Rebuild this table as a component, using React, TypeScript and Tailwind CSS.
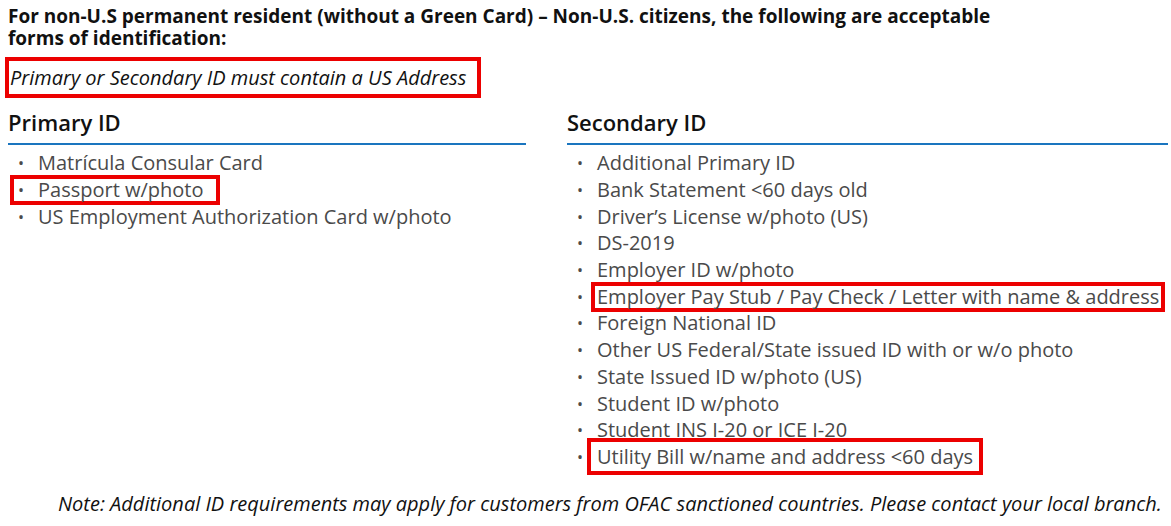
const primary = [
  { text: 'Matrícula Consular Card' },
  { text: 'Passport w/photo', box: 'all' },
  { text: 'US Employment Authorization Card w/photo' },
];

const secondary = [
  { text: 'Additional Primary ID' },
  { text: 'Bank Statement <60 days old' },
  { text: 'Driver’s License w/photo (US)' },
  { text: 'DS-2019' },
  { text: 'Employer ID w/photo' },
  { text: 'Employer Pay Stub / Pay Check / Letter with name & address', box: 'stub' },
  { text: 'Foreign National ID' },
  { text: 'Other US Federal/State issued ID with or w/o photo' },
  { text: 'State Issued ID w/photo (US)' },
  { text: 'Student ID w/photo' },
  { text: 'Student INS I-20 or ICE I-20' },
  { text: 'Utility Bill w/name and address <60 days', box: 'bill' },
];

type Item = { text: string; box?: string };

function IdList({ items }: { items: Item[] }) {
  return (
    <ul className="mt-[5px] pl-[10px]">
      {items.map((it) => {
        if (it.box === 'all') {
          return (
            <li key={it.text} className="h-[26.7px] flex items-center">
              <span className="-ml-[8px] flex items-center h-[30px] border-4 border-[#ec0000] pl-[4px] pr-[12px]">
                <span className="w-[20px] text-[16px]">•</span>
                <span>{it.text}</span>
              </span>
            </li>
          );
        }
        return (
          <li key={it.text} className="h-[26.7px] flex items-center">
            <span className="w-[20px] text-[16px]">•</span>
            {it.box === 'stub' && (
              <span className="-ml-[6px] h-[30px] flex items-center border-4 border-[#ec0000] pl-[2px] pr-[2px]">{it.text}</span>
            )}
            {it.box === 'bill' && (
              <span className="-ml-[10px] h-[37px] flex items-center border-4 border-[#ec0000] pl-[6px] pr-[6px]">{it.text}</span>
            )}
            {!it.box && <span>{it.text}</span>}
          </li>
        );
      })}
    </ul>
  );
}

export default function App() {
  return (
    <div className="w-[1171px] h-[526px] bg-white overflow-hidden font-['Open_Sans',sans-serif] pl-[8px] pt-[5px]">
      <p className="text-[19px] leading-[22px] font-bold text-[#111]">
        For non-U.S permanent resident (without a Green Card) – Non-U.S. citizens, the following are acceptable
        <br />
        forms of identification:
      </p>

      <div className="mt-[8px] -ml-[3px] w-[476px] h-[41px] border-4 border-[#ec0000] flex items-center pl-[1px]">
        <span className="italic text-[20px] text-[#111]">Primary or Secondary ID must contain a US Address</span>
      </div>

      <div className="mt-[9px] flex gap-[41px] text-[20px] text-[#4a4a4a]">
        <div className="w-[518px]">
          <h2 className="text-[22px] font-semibold text-[#111] leading-[30px]">Primary ID</h2>
          <div className="mt-[6px] h-[2px] bg-[#1a75bf]" />
          <IdList items={primary} />
        </div>
        <div className="w-[601px]">
          <h2 className="text-[22px] font-semibold text-[#111] leading-[30px]">Secondary ID</h2>
          <div className="mt-[6px] h-[2px] bg-[#1a75bf]" />
          <IdList items={secondary} />
        </div>
      </div>

      <p className="mt-[20px] pl-[50px] italic text-[20px] leading-[28px] text-[#111]">
        Note: Additional ID requirements may apply for customers from OFAC sanctioned countries. Please contact your local branch.
      </p>
    </div>
  );
}
